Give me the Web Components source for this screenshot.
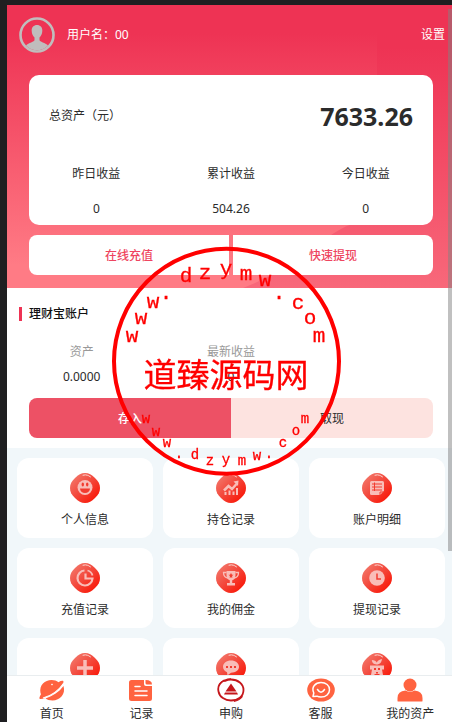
<!DOCTYPE html>
<html lang="zh-CN">
<head>
<meta charset="utf-8">
<meta name="viewport" content="width=device-width, initial-scale=1">
<title>我的资产</title>
<style>
html, body {
  height: 100%;
}
body {
  margin: 0;
  background: #1f1f21;
  color: #2b2b2b;
  font: 12px/18px "Noto Sans", "Noto Sans CJK SC", sans-serif;
  overflow: hidden;
}
</style>
</head>
<body>
<wallet-app>
  <wallet-hero username="00" total="7633.26">
    <stat-item label="昨日收益">0</stat-item>
    <stat-item label="累计收益">504.26</stat-item>
    <stat-item label="今日收益">0</stat-item>
  </wallet-hero>
  <account-panel name="理财宝账户">
    <stat-item class="dim" label="资产">0.0000</stat-item>
    <stat-item class="dim" label="最新收益">0</stat-item>
  </account-panel>
  <menu-grid>
    <menu-tile icon="smile">个人信息</menu-tile>
    <menu-tile icon="chart">持仓记录</menu-tile>
    <menu-tile icon="list">账户明细</menu-tile>
    <menu-tile icon="ring">充值记录</menu-tile>
    <menu-tile icon="cup">我的佣金</menu-tile>
    <menu-tile icon="clock">提现记录</menu-tile>
    <menu-tile icon="plus"></menu-tile>
    <menu-tile icon="chat"></menu-tile>
    <menu-tile icon="robot"></menu-tile>
  </menu-grid>
  <tab-bar slot="nav">
    <tab-item icon="planet">首页</tab-item>
    <tab-item icon="note">记录</tab-item>
    <tab-item icon="buy">申购</tab-item>
    <tab-item icon="service">客服</tab-item>
    <tab-item icon="person">我的资产</tab-item>
  </tab-bar>
</wallet-app>
<site-stamp></site-stamp>

<script>
// glyphs inside the red badges, 30x30
const badgeIcons = {
  smile: `
    <circle cx="15" cy="14.500" r="7.500" fill="#f9bdb8"/>
    <ellipse cx="12.800" cy="11.500" rx="1.200" ry="2" fill="#f23c30"/>
    <ellipse cx="17.200" cy="11.500" rx="1.200" ry="2" fill="#f23c30"/>
    <path d="M10 15.500h10a5 4.500 0 0 1-10 0z" fill="#f23c30"/>`,
  chart: `
    <path d="M8 17.500l4.500-4.500 3.500 3 4.500-5" fill="none" stroke="#f9bdb8" stroke-width="2.500"/>
    <path d="M17.500 8.500l5-1-.5 5.500z" fill="#f9bdb8"/>
    <path d="M9.500 19v3M13.500 17.500v4.500M17.500 18.500v3.500M21 15v7" stroke="#f9bdb8" stroke-width="2"/>`,
  list: `
    <path d="M9.500 8h11q1.500 0 1.500 1.500V18l-4 4H9.500Q8 22 8 20.500v-11Q8 8 9.500 8z" fill="#f9bdb8"/>
    <path d="M10 11h10M10 14h10M10 17h10M12.500 9.500v8.500" stroke="#f23c30" stroke-width="1"/>
    <path d="M18 22v-3h4" fill="none" stroke="#f23c30" stroke-width="1"/>`,
  ring: `
    <path d="M14.500 7.500A7.500 7.500 0 1 0 22.500 15.500h-7v-5" fill="none" stroke="#f9bdb8" stroke-width="2.200"/>
    <path d="M17.500 7.500a7 7 0 0 1 5 5" fill="none" stroke="#f9bdb8" stroke-width="1.800"/>`,
  cup: `
    <path d="M10.500 8h9v4q0 5-4.500 5.500-4.500-.5-4.500-5.500z" fill="#f9bdb8"/>
    <path d="M10.500 9.500H7.500q0 5 4.500 5.500M19.500 9.500h3q0 5-4.500 5.500" fill="none" stroke="#f9bdb8" stroke-width="1.300"/>
    <path d="M13.800 17h2.400v3H19v2.500h-8V20h2.800z" fill="#f9bdb8"/>
    <path d="M15 10l1 1.800h1.500L16 13l.5 1.500h-3L14 13l-1.500-1.200H14z" fill="#f23c30"/>`,
  clock: `
    <circle cx="15" cy="15" r="7.800" fill="#f9bdb8"/>
    <path d="M15 10.500v5.500h4" fill="none" stroke="#f23c30" stroke-width="1.500"/>`,
  plus: `<path d="M15 7v16M7 15h16" stroke="#f9bdb8" stroke-width="3.500"/>`,
  chat: `
    <path d="M15 7.500c-4.500 0-8 2.500-8 6.300 0 2.500 1.500 4.500 4 5.400l.5 3 3.500-2.500c4.500 0 8-2.300 8-5.900S19.500 7.500 15 7.500z" fill="#f9bdb8"/>
    <path d="M10 13h2v2h-2zM14 13h2v2h-2zM18 13h2v2h-2z" fill="#f23c30"/>`,
  robot: `
    <path d="M14.300 11.500Q10 11 9.800 7q4 0 4.900 2.500Q16 6.500 20 6q-.5 4.500-4.300 5.500z" fill="#f9bdb8"/>
    <path d="M8 12.500h14v4h-2L21 22h-3l-1-1h-4l-1 1H9l1-5.500H8z" fill="#f9bdb8"/>
    <path d="M12 15h2v2h-2zM16 15h2v2h-2zM14 19h2v1.500h-2z" fill="#f23c30"/>`,
};

// tab bar icons, 28x24
const tabIcons = {
  planet: `
    <path d="M2.500 15C1 7 7 2 13.500 2c3 0 5 .8 7 2.200Q23 2.500 25 2.800q1.500 1-1.500 5.200C18 15 11 19 4.500 19.500z" fill="#ff6340"/>
    <path d="M25.500 8c2.500 8-3.500 14.500-11 14.500-3 0-5.500-.8-7-2C15 18 21 14 25.500 8z" fill="#ff6340"/>
    <path d="M4 14.500q-4 6-2 6.500 2 .3 5-1z" fill="#ff6340"/>
    <path d="M25.500 5.500C20 13.500 13 18 5 20" fill="none" stroke="#fff" stroke-width="1.200"/>
    <path d="M14 5.500l1 1-1 1-1-1z" fill="#fff"/>`,
  note: `
    <path d="M4.500 2H17v4q0 2 2 2h6v12.500q0 2.500-2.500 2.500h-18Q2 23 2 20.500v-16Q2 2 4.500 2z" fill="#ff6340"/>
    <path d="M18.500 2Q25 2 25 6.500h-5q-1.500 0-1.500-1.500z" fill="#ff6340"/>
    <path d="M8 8.500h5M8 13h12M8 17.500h12" stroke="#fff" stroke-width="1.500" stroke-linecap="round"/>`,
  buy: `
    <path d="M7 2.500C2.500 5 .5 9 1.500 13.500 2.500 19 8 22.500 14 22.500c7 0 12.500-4 12.500-10.500C26.500 6 21 1.500 14 1.500q-3 0-6 1.500" fill="none" stroke="#c5161b" stroke-width="1.800" stroke-linecap="round"/>
    <path d="M2.500 6Q7 1 14 .9M17 23.300q5-.8 8.500-5" fill="none" stroke="#c5161b" stroke-width="1.200"/>
    <path d="M14 5.500l5.500 8h-11zM8 14.500h12l1 2H7z" fill="#c5161b"/>`,
  service: `
    <ellipse cx="14" cy="12" rx="13.800" ry="11.500" fill="#ff6340"/>
    <path d="M6 18.500l.8-3.500C4 9 8.500 4.500 14 4.500c5 0 8.500 3 8.500 7.200 0 4.300-3.500 7.300-8.500 7.300-2 0-3-.3-4-.8z" fill="none" stroke="#fff" stroke-width="1.500" stroke-linejoin="round"/>
    <path d="M10.500 11.500q3.500 5.500 7 0" fill="none" stroke="#fff" stroke-width="1.500" stroke-linecap="round"/>`,
  person: `
    <circle cx="14" cy="7" r="6.500" fill="#ff6340"/>
    <path d="M1.500 23v-3q0-7 8-7.500 4.500 2.500 9 0 8 .5 8 7.500v3q0 .5-1 .5h-23q-1 0-1-.5z" fill="#ff6340"/>`,
};

function attach(el, html) {
  const tpl = document.createElement("template");
  tpl.innerHTML = html;
  el.attachShadow({ mode: "open" }).append(tpl.content.cloneNode(true));
}

class WalletApp extends HTMLElement {
  constructor() {
    super();
    attach(this, `
<style>
:host {
  display: flex;
  flex-direction: column;
  box-sizing: border-box;
  height: 100vh;
  padding: 5px 0 0 7px;
  margin-right: -3px;
}
main {
  flex: 1;
  min-height: 0;
  overflow-y: auto;
  scrollbar-width: none;
  background: #f1f7fa;
}
.thumb {
  position: absolute;
  top: 9px;
  right: 0;
  width: 4px;
  height: 75%;
  background: rgba(130, 130, 130, 0.5);
}
</style>
<main><slot></slot></main>
<slot name="nav"></slot>
<div class="thumb"></div>
`);
  }
}

class StatItem extends HTMLElement {
  constructor() {
    super();
    attach(this, `
<style>
:host {
  display: flex;
  flex-direction: column;
  flex: 1;
  text-align: center;
  line-height: 35px;
}
:host(.dim) {
  line-height: 25px;
}
:host(.dim) .label {
  color: #999;
}
</style>
<span class="label"></span>
<span><slot></slot></span>
`);
    this.shadowRoot.querySelector(".label").textContent = this.getAttribute("label");
  }
}

class WalletHero extends HTMLElement {
  constructor() {
    super();
    attach(this, `
<style>
:host {
  display: grid;
  background: linear-gradient(#ee3354 10%, #ff7b85 92%);
}
.shade, .body {
  grid-area: 1 / 1;
  min-width: 0;
}
.shade {
  width: 100%;
  height: 100%;
  min-height: 0;
  contain: size;
}
.body {
  padding: 12px 22px 13px;
}
.user {
  display: flex;
  align-items: center;
  gap: 12px;
  margin: 0 -12px 22px -10px;
  color: #fff;
}
.user svg {
  width: 36px;
  height: 36px;
}
.user a {
  margin-left: auto;
  color: inherit;
  text-decoration: none;
}
.card {
  box-sizing: border-box;
  height: 150px;
  background: #fff;
  border-radius: 10px;
}
.total {
  display: flex;
  align-items: center;
  justify-content: space-between;
  height: 81px;
  padding: 0 20px;
}
.total b {
  font-size: 25px;
}
.stats {
  display: flex;
}
.actions {
  display: flex;
  gap: 4px;
  margin-top: 10px;
}
button {
  flex: 1;
  height: 40px;
  border: 0;
  padding: 2px 0 0;
  border-radius: 8px 0 0 8px;
  background: #fff;
  color: #ee4560;
  font: inherit;
  font-weight: 500;
}
button + button {
  border-radius: 0 8px 8px 0;
}
</style>
<svg class="shade" viewBox="0 0 448 283" preserveAspectRatio="none">
  <defs>
    <linearGradient id="g" x1="0" y1="0" x2="0" y2="1">
      <stop offset="0.150" stop-color="#ee3354"/>
      <stop offset="1" stop-color="#f8687a"/>
    </linearGradient>
  </defs>
  <path d="M370 0H448V283H236C290 262 318 228 345 219Q370 160 370 70z" fill="url(#g)"/>
</svg>
<div class="body">
  <div class="user">
    <svg viewBox="0 0 36 36">
      <circle cx="18" cy="18" r="16.500" fill="none" stroke="#c0bdbd" stroke-width="2.600"/>
      <path d="M18 8c3.500 0 5.500 2.500 5.300 6-.1 3-1.200 5-2.800 6.500v2.500c0 2 6 2.500 8.500 5.500A15 15 0 0 1 7 28.500c2.500-3 8.500-3.500 8.500-5.500v-2.500c-1.600-1.500-2.700-3.500-2.800-6.500C12.500 10.500 14.500 8 18 8z" fill="#c0bdbd"/>
    </svg>
    <span id="name"></span>
    <a href="#settings">设置</a>
  </div>
  <div class="card">
    <div class="total"><span>总资产（元）</span><b id="total"></b></div>
    <div class="stats"><slot></slot></div>
  </div>
  <div class="actions">
    <button>在线充值</button>
    <button>快速提现</button>
  </div>
</div>
`);
    this.shadowRoot.getElementById("name").textContent = `用户名：${this.getAttribute("username")}`;
    this.shadowRoot.getElementById("total").textContent = this.getAttribute("total");
  }
}

class AccountPanel extends HTMLElement {
  constructor() {
    super();
    attach(this, `
<style>
:host {
  display: block;
  padding: 17px 0 10px;
  background: #fff;
}
h2 {
  display: flex;
  align-items: center;
  gap: 7px;
  margin: 0 12px 16px;
  font-size: 12px;
  font-weight: 500;
  line-height: 18px;
  color: #111;
}
h2::before {
  content: "";
  width: 3px;
  height: 14px;
  background: #ee3354;
}
.stats {
  display: grid;
  grid-template-columns: repeat(3, 1fr);
}
.actions {
  display: flex;
  margin: 9px 22px 0;
}
button {
  flex: 1;
  height: 40px;
  border: 0;
  padding: 2px 0 0;
  font: inherit;
  color: #2b2b2b;
  background: #fde3e0;
  border-radius: 0 8px 8px 0;
}
button.in {
  color: #fff;
  font-weight: 500;
  background: #ed5165;
  border-radius: 8px 0 0 8px;
}
</style>
<h2></h2>
<div class="stats"><slot></slot></div>
<div class="actions">
  <button class="in">存入</button>
  <button>取现</button>
</div>
`);
    this.shadowRoot.querySelector("h2").textContent = this.getAttribute("name");
  }
}

class MenuGrid extends HTMLElement {
  constructor() {
    super();
    attach(this, `
<style>
:host {
  display: grid;
  grid-template-columns: repeat(3, 1fr);
  gap: 10px;
  padding: 10px;
}
</style>
<slot></slot>
`);
  }
}

class MenuTile extends HTMLElement {
  constructor() {
    super();
    attach(this, `
<style>
:host {
  display: block;
}
button {
  display: flex;
  flex-direction: column;
  align-items: center;
  gap: 8px;
  box-sizing: border-box;
  width: 100%;
  height: 80px;
  padding: 15px 0 0;
  border: 0;
  border-radius: 12px;
  background: #fff;
  color: inherit;
  font: inherit;
}
svg {
  width: 30px;
  height: 30px;
}
</style>
<button>
  <svg viewBox="0 0 30 30">
    <defs>
      <linearGradient id="g" x1="0.100" y1="0.100" x2="0.900" y2="0.900">
        <stop offset="0" stop-color="#f3776a"/>
        <stop offset="0.450" stop-color="#f34a3e"/>
        <stop offset="1" stop-color="#fa1505"/>
      </linearGradient>
    </defs>
    <path d="M15 0c4 0 6.500 1.500 10 5s5 6 5 10-1.500 6.500-5 10-6 5-10 5-6.500-1.500-10-5-5-6-5-10 1.500-6.500 5-10 6-5 10-5z" fill="url(#g)"/>
    <path d="M13 2.200q2.500-.8 4.500 0M18.500 2.700l2 1.200" fill="none" stroke="#fcd5d0" stroke-width="1" stroke-linecap="round"/>
    ${badgeIcons[this.getAttribute("icon")]}
  </svg>
  <slot></slot>
</button>
`);
  }
}

class TabBar extends HTMLElement {
  constructor() {
    super();
    attach(this, `
<style>
:host {
  display: flex;
  height: 46px;
  border-top: 1px solid #e9edef;
  background: #fff;
}
</style>
<slot></slot>
`);
  }
}

class TabItem extends HTMLElement {
  constructor() {
    super();
    attach(this, `
<style>
:host {
  display: block;
  flex: 1;
}
a {
  display: flex;
  flex-direction: column;
  align-items: center;
  gap: 3px;
  padding-top: 2px;
  color: inherit;
  text-decoration: none;
}
svg {
  width: 28px;
  height: 24px;
}
</style>
<a href="#${this.getAttribute("icon")}">
  <svg viewBox="0 0 28 24">${tabIcons[this.getAttribute("icon")]}</svg>
  <slot></slot>
</a>
`);
  }
}

// letters along the ring: [char, centre x, baseline]
const upperRing = [
  ["w", 22, 102], ["w", 31, 84], ["w", 43, 68], [".", 56, 59], ["d", 76, 42],
  ["z", 95, 39], ["y", 116, 35], ["m", 136, 40], ["w", 155, 46], [".", 169, 59],
  ["c", 188, 69], ["o", 200, 84], ["m", 209, 102],
];
const lowerRing = [
  ["w", 36, 183], ["w", 46, 196], ["w", 57, 207], [".", 69, 218], ["d", 85, 219],
  ["z", 100, 225], ["y", 116, 224], ["m", 132, 225], ["w", 147, 220], [".", 159, 218],
  ["c", 173, 207], ["o", 186, 195], ["m", 195, 183],
];

class SiteStamp extends HTMLElement {
  constructor() {
    super();
    const letters = (ring, size) => ring
      .map(([c, x, y]) => `<text x="${x}" y="${y}" font-size="${size}">${c}</text>`)
      .join("");
    attach(this, `
<style>
:host {
  position: fixed;
  inset: 0;
  display: grid;
  place-items: center;
  pointer-events: none;
}
svg {
  width: 232px;
  height: 232px;
}
text {
  font-family: "Liberation Mono", monospace;
  text-anchor: middle;
  fill: #f00;
  stroke: #f00;
  stroke-width: 0.3;
}
.name {
  font-family: "Noto Sans CJK SC", sans-serif;
  font-size: 33px;
}
</style>
<svg viewBox="0 5 232 232">
  <circle cx="116.500" cy="121.300" r="112.500" fill="none" stroke="#f00" stroke-width="4"/>
  ${letters(upperRing, 21)}
  <text class="name" x="116" y="147">道臻源码网</text>
  ${letters(lowerRing, 14)}
</svg>
`);
  }
}

customElements.define("wallet-app", WalletApp);
customElements.define("stat-item", StatItem);
customElements.define("wallet-hero", WalletHero);
customElements.define("account-panel", AccountPanel);
customElements.define("menu-grid", MenuGrid);
customElements.define("menu-tile", MenuTile);
customElements.define("tab-bar", TabBar);
customElements.define("tab-item", TabItem);
customElements.define("site-stamp", SiteStamp);
</script>
</body>
</html>
